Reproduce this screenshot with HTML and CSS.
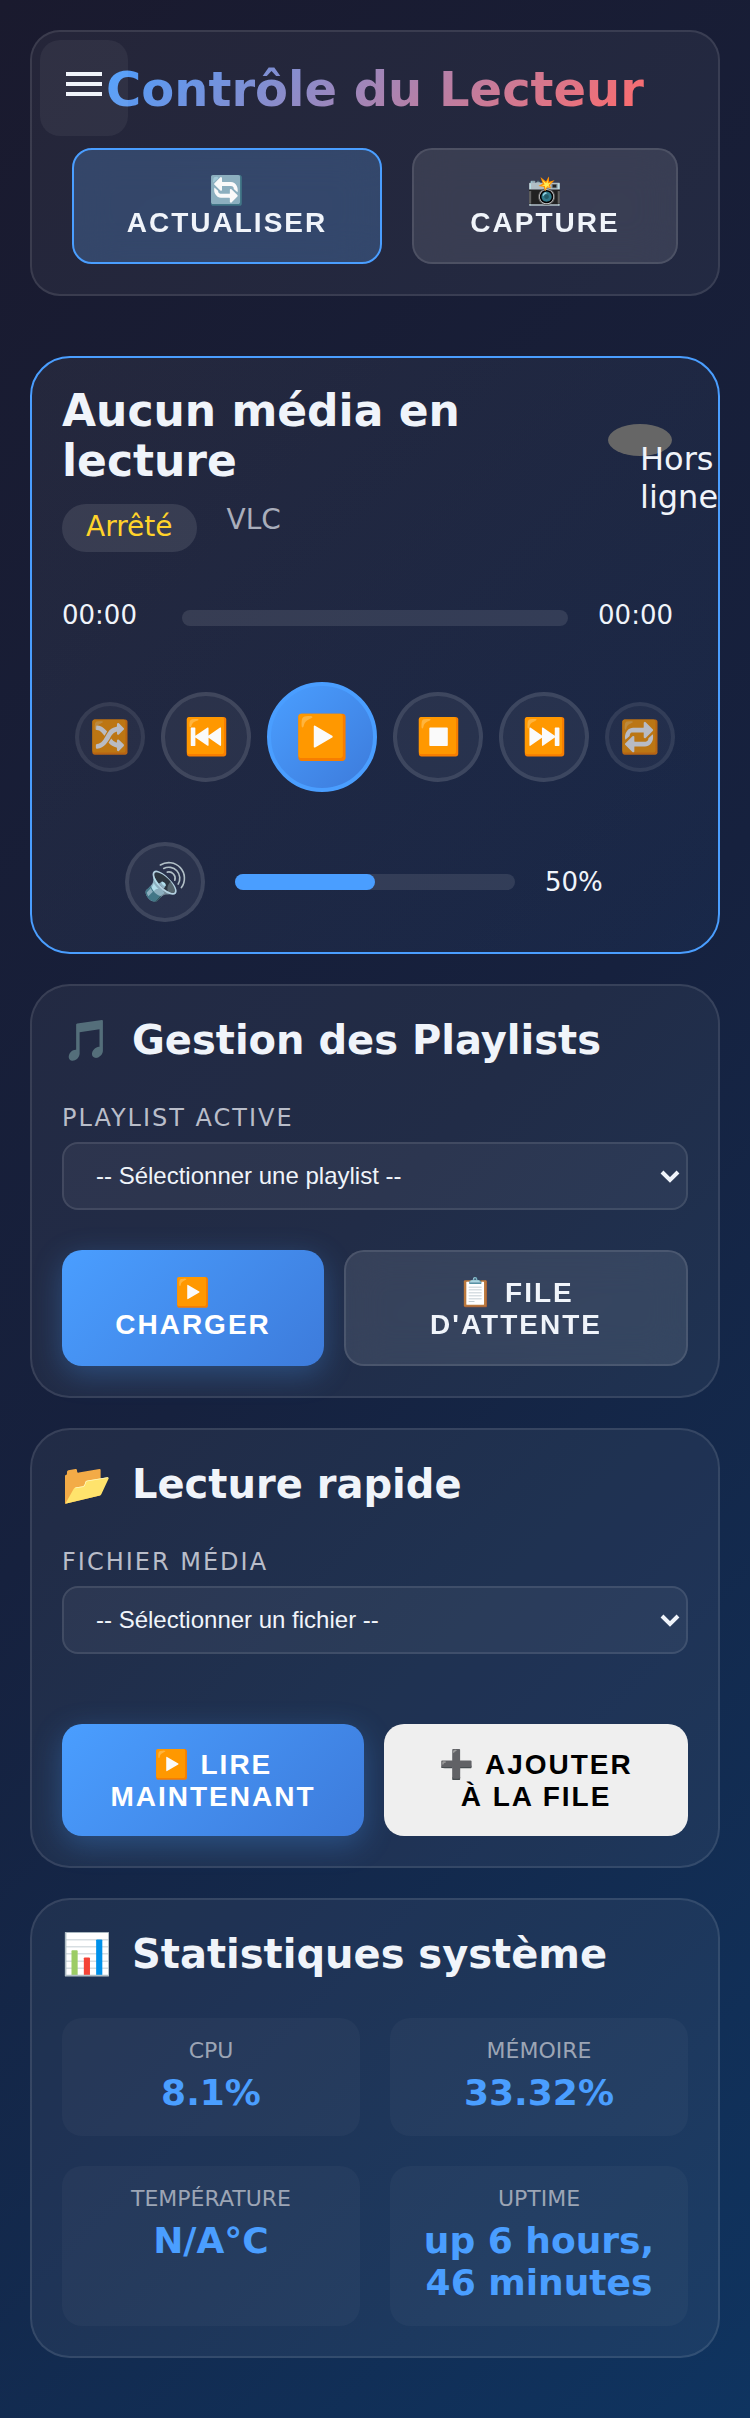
FILE: index.html
```html
<!DOCTYPE html>
<html lang="fr">
<head>
<meta charset="utf-8">
<meta name="viewport" content="width=device-width, initial-scale=1">
<title>Contrôle du Lecteur</title>
<link rel="stylesheet" href="styles.css">
</head>
<body>
<button class="menu-toggle" type="button" aria-label="Menu">
  <span class="menu-bar"></span><span class="menu-bar"></span><span class="menu-bar"></span>
</button>
<main class="page">
  <header class="card header">
    <h1 class="page-title">Contrôle du Lecteur</h1>
    <div class="header-actions">
      <button class="btn btn-active" type="button">🔄<br>Actualiser</button>
      <button class="btn btn-glass" type="button">📸<br>Capture</button>
    </div>
  </header>

  <section class="card player">
    <div class="player-head">
      <div class="player-info">
        <h2 class="media-title">Aucun média en lecture</h2>
        <div class="media-meta">
          <span class="badge">Arrêté</span>
          <span class="engine">VLC</span>
        </div>
      </div>
      <div class="status-dot"><span class="status-text">Hors ligne</span></div>
    </div>
    <div class="progress">
      <span class="time time-start">00:00</span>
      <div class="track progress-track"></div>
      <span class="time">00:00</span>
    </div>
    <div class="controls">
      <button class="ctl ctl-small" type="button" aria-label="Aléatoire">🔀</button>
      <button class="ctl" type="button" aria-label="Précédent">⏮️</button>
      <button class="ctl ctl-play" type="button" aria-label="Lecture">▶️</button>
      <button class="ctl" type="button" aria-label="Stop">⏹️</button>
      <button class="ctl" type="button" aria-label="Suivant">⏭️</button>
      <button class="ctl ctl-small" type="button" aria-label="Répéter">🔁</button>
    </div>
    <div class="volume">
      <button class="ctl ctl-volume" type="button" aria-label="Volume">🔊</button>
      <div class="track volume-track"><div class="fill" style="width: 50%"></div></div>
      <span class="time volume-value">50%</span>
    </div>
  </section>

  <section class="card">
    <h2 class="card-title"><span class="card-icon">🎵</span>Gestion des Playlists</h2>
    <label class="label" for="playlist">Playlist active</label>
    <div class="select-box">
      <select class="select" id="playlist"><option>-- Sélectionner une playlist --</option></select>
      <svg class="chevron" viewBox="0 0 20 14" aria-hidden="true"><path d="M2 2 L10 10 L18 2"/></svg>
    </div>
    <div class="actions actions-playlist">
      <button class="btn btn-primary" type="button">▶️<br>Charger</button>
      <button class="btn btn-glass" type="button">📋 File<br>d'attente</button>
    </div>
  </section>

  <section class="card">
    <h2 class="card-title"><span class="card-icon">📂</span>Lecture rapide</h2>
    <label class="label" for="media">Fichier média</label>
    <div class="select-box">
      <select class="select" id="media"><option>-- Sélectionner un fichier --</option></select>
      <svg class="chevron" viewBox="0 0 20 14" aria-hidden="true"><path d="M2 2 L10 10 L18 2"/></svg>
    </div>
    <div class="actions actions-quick">
      <button class="btn btn-primary" type="button">▶️ Lire<br>maintenant</button>
      <button class="btn btn-plain" type="button">➕ Ajouter<br>à la file</button>
    </div>
  </section>

  <section class="card">
    <h2 class="card-title"><span class="card-icon">📊</span>Statistiques système</h2>
    <div class="stats">
      <div class="stat"><div class="stat-label">CPU</div><div class="stat-value">8.1%</div></div>
      <div class="stat"><div class="stat-label">Mémoire</div><div class="stat-value">33.32%</div></div>
      <div class="stat"><div class="stat-label">Température</div><div class="stat-value">N/A°C</div></div>
      <div class="stat"><div class="stat-label">Uptime</div><div class="stat-value">up 6 hours, 46 minutes</div></div>
    </div>
  </section>
</main>
</body>
</html>
```
FILE: styles.css
```css
* { box-sizing: border-box; }

body {
  margin: 0;
  font-family: "DejaVu Sans", sans-serif;
  color: #f0f4fa;
  background: linear-gradient(135deg, #1a1a2e 0%, #16213e 50%, #0f3460 100%);
}

h1, h2 { margin: 0; }

button { font-family: "Liberation Sans", Arial, sans-serif; cursor: pointer; }

.page {
  display: flex;
  flex-direction: column;
  gap: 30px;
  padding: 30px 30px 60px;
}

.card {
  padding: 30px;
  border: 2px solid rgba(255, 255, 255, 0.1);
  border-radius: 40px;
  background: rgba(255, 255, 255, 0.05);
}

/* Menu button floating over the header */
.menu-toggle {
  position: absolute;
  top: 40px;
  left: 40px;
  display: flex;
  flex-direction: column;
  gap: 6px;
  width: 88px;
  height: 96px;
  padding: 32px 26px;
  border: 0;
  border-radius: 20px;
  background: rgba(255, 255, 255, 0.05);
}

.menu-bar { height: 4px; background: #f0f4fa; }

.header {
  display: flex;
  flex-direction: column;
  align-items: center;
  gap: 32px;
  margin-bottom: 30px;
  border-radius: 30px;
}

.page-title {
  font-size: 48px;
  line-height: 54px;
  color: transparent;
  background: linear-gradient(135deg, #4a9eff, #ff6b6b);
  background-clip: text;
  -webkit-background-clip: text;
}

.header-actions {
  display: grid;
  grid-template-columns: 310fr 266fr;
  gap: 30px;
  align-self: stretch;
  padding: 0 10px;
}

.btn {
  padding: 25px 24px 23px;
  border: 0;
  border-radius: 20px;
  font-size: 28px;
  font-weight: 700;
  line-height: 32px;
  letter-spacing: 2px;
  text-transform: uppercase;
}

.btn-glass, .btn-active {
  border: 2px solid rgba(255, 255, 255, 0.1);
  color: #f0f4fa;
  background: rgba(255, 255, 255, 0.1);
  backdrop-filter: blur(20px);
}

.btn-active {
  border-color: #4a9eff;
  background: linear-gradient(rgba(74, 158, 255, 0.2), rgba(74, 158, 255, 0.2)), rgba(255, 255, 255, 0.05);
}

.btn-primary {
  color: #fff;
  background: linear-gradient(135deg, #4a9eff, #3d7bdb);
  box-shadow: 0 8px 30px rgba(74, 158, 255, 0.3);
}

.btn-plain { color: #000; background: #efefef; }

.player {
  padding-top: 28px;
  border-color: #4a9eff;
  background: linear-gradient(135deg, rgba(255, 255, 255, 0.05), rgba(74, 158, 255, 0.05));
}

.player-head {
  display: flex;
  align-items: flex-start;
  justify-content: space-between;
  margin-right: 16px;
}

.player-info { width: 440px; }

.media-title { font-size: 44px; line-height: 50px; }

.media-meta {
  display: flex;
  align-items: flex-start;
  gap: 30px;
  margin-top: 18px;
  font-size: 28px;
  line-height: 32px;
}

.badge {
  padding: 7px 24px 9px;
  border-radius: 24px;
  color: #ffd32a;
  background: rgba(255, 255, 255, 0.1);
}

.engine { color: #a9aebb; }

.status-dot {
  position: relative;
  width: 64px;
  height: 32px;
  margin-top: 38px;
  border-radius: 50%;
  background: #666;
}

.status-text {
  position: absolute;
  top: 50%;
  left: 50%;
  font-size: 32px;
  line-height: 38px;
}

.progress {
  display: flex;
  align-items: flex-start;
  gap: 30px;
  margin: 48px 15px 52px 0;
}

.time { font-size: 26px; line-height: 30px; }
.time-start { min-width: 90px; }

.track {
  height: 16px;
  border-radius: 8px;
  background: rgba(255, 255, 255, 0.1);
}

.progress-track { flex: 1; margin-top: 10px; }

.controls {
  display: flex;
  align-items: center;
  justify-content: center;
  gap: 16px;
}

.ctl {
  display: flex;
  align-items: center;
  justify-content: center;
  width: 90px;
  height: 90px;
  padding: 0;
  border: 4px solid rgba(255, 255, 255, 0.1);
  border-radius: 50%;
  font-size: 36px;
  color: #f0f4fa;
  background: rgba(255, 255, 255, 0.05);
}

.ctl-small { width: 70px; height: 70px; font-size: 32px; opacity: 0.7; }

.ctl-play {
  width: 110px;
  height: 110px;
  border-color: #4a9eff;
  font-size: 43px;
  background: linear-gradient(135deg, #4a9eff, #3d7bdb);
}

.ctl-volume { width: 80px; height: 80px; }

.volume {
  display: flex;
  align-items: center;
  justify-content: center;
  gap: 30px;
  margin-top: 50px;
}

.volume-track { width: 280px; }
.volume-value { width: 80px; }
.fill { height: 100%; border-radius: 8px; background: #4a9eff; }

.card-title {
  display: flex;
  align-items: center;
  gap: 20px;
  font-size: 40px;
  line-height: 48px;
}

.card-icon { font-weight: 400; }

.label {
  display: block;
  margin: 40px 0 10px;
  font-size: 24px;
  line-height: 28px;
  letter-spacing: 2px;
  text-transform: uppercase;
  color: #b9bdc9;
}

.select-box { position: relative; }

.select {
  display: block;
  width: 100%;
  height: 68px;
  padding: 0 32px 2px;
  border: 2px solid rgba(255, 255, 255, 0.1);
  border-radius: 16px;
  appearance: none;
  font-family: "Liberation Sans", Arial, sans-serif;
  font-size: 24px;
  color: #f0f4fa;
  background: rgba(255, 255, 255, 0.05);
}

.chevron {
  position: absolute;
  top: 28px;
  right: 8px;
  width: 20px;
  height: 14px;
  fill: none;
  stroke: #f0f4fa;
  stroke-width: 4;
  pointer-events: none;
}

.actions { display: grid; gap: 20px; margin-top: 40px; }
.actions-playlist { grid-template-columns: 262fr 344fr; }
.actions-quick { grid-template-columns: 302fr 304fr; margin-top: 70px; }

.stats {
  display: grid;
  grid-template-columns: 1fr 1fr;
  gap: 30px;
  margin-top: 40px;
}

.stat {
  padding: 20px 20px 22px;
  border-radius: 20px;
  text-align: center;
  background: rgba(255, 255, 255, 0.03);
}

.stat-label {
  margin-bottom: 8px;
  font-size: 22px;
  line-height: 26px;
  text-transform: uppercase;
  color: #9ca5b5;
}

.stat-value {
  font-size: 36px;
  font-weight: 700;
  line-height: 42px;
  color: #4a9eff;
}
```
